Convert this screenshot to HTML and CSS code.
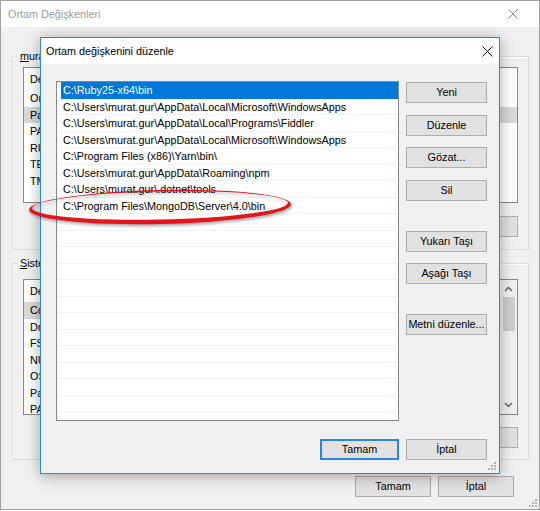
FILE: index.html
```html
<!DOCTYPE html>
<html lang="tr">
<head>
<meta charset="utf-8">
<title>Ortam Değişkenleri</title>
<link rel="stylesheet" href="styles.css">
</head>
<body>
<div class="win">
  <div class="titlebar">
    <span class="title-text muted">Ortam Değişkenleri</span>
    <svg class="close bg-close" width="10" height="10" viewBox="0 0 10 10"><path d="M0.5 0.5 L9.5 9.5 M9.5 0.5 L0.5 9.5" stroke="#8a8a8a" stroke-width="1"/></svg>
  </div>
  <div class="win-body">
    <fieldset class="group g1">
      <legend><u>m</u>urat.gur için kullanıcı değişkenleri</legend>
      <div class="vlist">
        <div class="vhead"><span>Değişken</span><span>Değer</span></div>
        <div class="vrow"><span>OneDrive</span><span>C:\Users\murat.gur\OneDrive</span></div>
        <div class="vrow sel"><span>Path</span><span>C:\Ruby25-x64\bin;C:\Users\murat.gur\AppData\Local\Microsoft\...</span></div>
        <div class="vrow"><span>PATH</span><span>C:\Users\murat.gur\.dotnet\tools</span></div>
        <div class="vrow"><span>RUBYOPT</span><span>-Eutf-8</span></div>
        <div class="vrow"><span>TEMP</span><span>C:\Users\murat.gur\AppData\Local\Temp</span></div>
        <div class="vrow"><span>TMP</span><span>C:\Users\murat.gur\AppData\Local\Temp</span></div>
      </div>
      <div class="btnrow">
        <button class="btn">Yeni...</button>
        <button class="btn">Düzenle...</button>
        <button class="btn">Sil</button>
      </div>
    </fieldset>
    <fieldset class="group g2">
      <legend><u>S</u>istem değişkenleri</legend>
      <div class="vlist scroll">
        <div class="vinner">
          <div class="vhead"><span>Değişken</span><span>Değer</span></div>
          <div class="vrow sel"><span>ComSpec</span><span>C:\WINDOWS\system32\cmd.exe</span></div>
          <div class="vrow"><span>DriverData</span><span>C:\Windows\System32\Drivers\DriverData</span></div>
          <div class="vrow"><span>FSHARPINSTALLDIR</span><span>C:\Program Files (x86)\Microsoft SDKs\F#\</span></div>
          <div class="vrow"><span>NUMBER_OF_PROCESSORS</span><span>4</span></div>
          <div class="vrow"><span>OS</span><span>Windows_NT</span></div>
          <div class="vrow"><span>Path</span><span>C:\Program Files\Docker\Docker\Resources\bin</span></div>
          <div class="vrow"><span>PATHEXT</span><span>.COM;.EXE;.BAT;.CMD;.VBS;.VBE;.JS</span></div>
        </div>
        <div class="vscroll">
          <svg class="chev" width="9" height="6" viewBox="0 0 9 6"><path d="M1 5 L4.5 1.5 L8 5" fill="none" stroke="#606060" stroke-width="1.4"/></svg>
          <div class="thumb"></div>
          <div class="track"></div>
          <svg class="chev" width="9" height="6" viewBox="0 0 9 6"><path d="M1 1 L4.5 4.5 L8 1" fill="none" stroke="#606060" stroke-width="1.4"/></svg>
        </div>
      </div>
      <div class="btnrow">
        <button class="btn">Yeni...</button>
        <button class="btn">Düzenle...</button>
        <button class="btn">Sil</button>
      </div>
    </fieldset>
    <div class="win-actions">
      <button class="btn">Tamam</button>
      <button class="btn">İptal</button>
    </div>
  </div>
  <svg class="grip win-grip" width="9" height="9" viewBox="0 0 9 9"><g fill="#b4b4b4"><rect x="6" y="0" width="2" height="2"/><rect x="3" y="3" width="2" height="2"/><rect x="6" y="3" width="2" height="2"/><rect x="0" y="6" width="2" height="2"/><rect x="3" y="6" width="2" height="2"/><rect x="6" y="6" width="2" height="2"/></g></svg>
</div>

<div class="dialog">
  <div class="dlg-title">
    <span class="title-text">Ortam değişkenini düzenle</span>
    <svg class="close" width="11" height="11" viewBox="0 0 11 11"><path d="M0.5 0.5 L10.5 10.5 M10.5 0.5 L0.5 10.5" stroke="#111" stroke-width="1"/></svg>
  </div>
  <div class="dlg-body">
    <div class="dlg-main">
      <div class="plist">
        <div class="prow sel">C:\Ruby25-x64\bin</div>
        <div class="prow">C:\Users\murat.gur\AppData\Local\Microsoft\WindowsApps</div>
        <div class="prow">C:\Users\murat.gur\AppData\Local\Programs\Fiddler</div>
        <div class="prow">C:\Users\murat.gur\AppData\Local\Microsoft\WindowsApps</div>
        <div class="prow">C:\Program Files (x86)\Yarn\bin\</div>
        <div class="prow">C:\Users\murat.gur\AppData\Roaming\npm</div>
        <div class="prow">C:\Users\murat.gur\.dotnet\tools</div>
        <div class="prow">C:\Program Files\MongoDB\Server\4.0\bin</div>
        <div class="prow"></div><div class="prow"></div><div class="prow"></div><div class="prow"></div>
        <div class="prow"></div><div class="prow"></div><div class="prow"></div><div class="prow"></div>
        <div class="prow"></div><div class="prow"></div><div class="prow"></div><div class="prow"></div>
        <div class="prow"></div>
      </div>
      <div class="side">
        <button class="btn dbtn">Yeni</button>
        <button class="btn dbtn">Düzenle</button>
        <button class="btn dbtn">Gözat...</button>
        <button class="btn dbtn">Sil</button>
        <button class="btn dbtn gap">Yukarı Taşı</button>
        <button class="btn dbtn">Aşağı Taşı</button>
        <button class="btn dbtn gap">Metni düzenle...</button>
      </div>
    </div>
    <div class="dlg-actions">
      <button class="btn ok">Tamam</button>
      <button class="btn cancel">İptal</button>
    </div>
  </div>
  <svg class="grip dlg-grip" width="9" height="9" viewBox="0 0 9 9"><g fill="#b4b4b4"><rect x="6" y="0" width="2" height="2"/><rect x="3" y="3" width="2" height="2"/><rect x="6" y="3" width="2" height="2"/><rect x="0" y="6" width="2" height="2"/><rect x="3" y="6" width="2" height="2"/><rect x="6" y="6" width="2" height="2"/></g></svg>
</div>

<svg class="mark" width="300" height="60" viewBox="20 180 300 60">
  <path fill="#e3141b" fill-rule="evenodd" transform="rotate(-1.2 160 206)"
    d="M29 207 A131 17 0 0 1 291 207 A131 17 0 0 1 29 207 Z
       M32 205.5 A128 14 0 0 0 288 205.5 A128 14 0 0 0 32 205.5 Z"/>
</svg>
</body>
</html>
```

FILE: styles.css
```css
* { box-sizing: border-box; }
html, body { margin: 0; padding: 0; }
body {
  width: 540px;
  height: 511px;
  overflow: hidden;
  position: relative;
  font-family: "Liberation Sans", Arial, sans-serif;
  font-size: 10.8px;
  color: #000;
  background: #fff;
}
button { font-family: inherit; font-size: 10.8px; color: #000; }

.win {
  position: relative;
  width: 540px;
  height: 510px;
  border: 1px solid #a0a0a0;
  background: #f0f0f0;
  display: flex;
  flex-direction: column;
}
.titlebar {
  height: 26px;
  background: #fff;
  display: flex;
  align-items: center;
  justify-content: space-between;
  padding: 0 21px 0 7px;
  flex: none;
}
.title-text { line-height: 14px; }
.muted { color: #9a9a9a; }

.win-body {
  display: flex;
  flex-direction: column;
  padding: 0 10px 0 11px;
}
.group {
  margin: 0;
  border: 1px solid #dcdcdc;
  box-shadow: inset 1px 1px 0 #fff;
  padding: 4px 10px 12px 10px;
  min-width: 0;
}
.group legend {
  padding: 0 2px;
  margin-left: -5px;
  line-height: 14px;
  height: 14px;
}
.g1 { margin-top: 22px; }
.g2 { margin-top: 6px; padding-top: 9px; padding-bottom: 11px; }

.vlist {
  height: 136px;
  background: #fff;
  border: 1px solid #828790;
  overflow: hidden;
  display: flex;
}
.vlist:not(.scroll) { flex-direction: column; }
.vinner { flex: 1; display: flex; flex-direction: column; min-width: 0; }
.vhead {
  height: 22px;
  flex: none;
  display: flex;
  align-items: center;
  border-bottom: 1px solid #fff;
}
.vhead span, .vrow span { padding-left: 6px; white-space: nowrap; overflow: hidden; }
.vhead span:first-child, .vrow span:first-child { width: 160px; flex: none; }
.vhead span + span, .vrow span + span { width: 240px; flex: none; }
.vrow {
  height: 16.5px;
  flex: none;
  display: flex;
  align-items: center;
}
.vrow.sel { background: #d9d9d9; }
.vscroll {
  width: 17px;
  flex: none;
  background: #f0f0f0;
  display: flex;
  flex-direction: column;
  align-items: center;
  padding: 6px 0 6px;
}
.vscroll .chev { flex: none; }
.thumb { width: 12px; height: 34px; background: #cdcdcd; margin-top: 5px; flex: none; }
.track { flex: 1; }

.btnrow {
  display: flex;
  justify-content: flex-end;
  gap: 8px;
  margin-top: 13px;
}
.btn {
  height: 21px;
  width: 76px;
  padding: 0;
  border: 1px solid #adadad;
  background: #e1e1e1;
  line-height: 19px;
  text-align: center;
  white-space: nowrap;
}
.g2 .btnrow { margin-top: 12px; }
.win-actions {
  display: flex;
  justify-content: flex-end;
  gap: 7px;
  margin-top: 16px;
  padding-right: 15px;
}

.grip { position: absolute; }
.win-grip { right: 1px; bottom: 1px; }
.dlg-grip { right: 2px; bottom: 2px; }

/* dialog on top */
.dialog {
  position: absolute;
  left: 40px;
  top: 37px;
  width: 460px;
  height: 437px;
  border: 1px solid #2b87d4;
  background: #f0f0f0;
  box-shadow: 0 2px 14px rgba(0, 0, 0, 0.33);
  display: flex;
  flex-direction: column;
}
.dlg-title {
  height: 26px;
  flex: none;
  background: #fff;
  display: flex;
  align-items: center;
  justify-content: space-between;
  padding: 0 6px 0 5px;
}
.dlg-body {
  flex: 1;
  display: flex;
  flex-direction: column;
  padding: 17px 12px 13px 15px;
}
.dlg-main { display: flex; gap: 7px; }
.plist {
  width: 343px;
  height: 340px;
  background: #fff;
  border: 1px solid #828790;
  overflow: hidden;
  display: flex;
  flex-direction: column;
}
.prow {
  height: 16.5px;
  flex: none;
  border-bottom: 1px solid #f2f2f2;
  padding: 1px 0 0 6px;
  line-height: 14.5px;
  white-space: nowrap;
}
.prow.sel {
  background: #0078d7;
  color: #fff;
  margin-left: 4px;
  padding-left: 2px;
  border-bottom-color: #0078d7;
}
.side {
  display: flex;
  flex-direction: column;
  padding-top: 1px;
  gap: 11.5px;
}
.dbtn { width: 81px; flex: none; }
.dbtn.gap { margin-top: 18.5px; }
.dlg-actions {
  display: flex;
  justify-content: flex-end;
  gap: 7px;
  margin-top: 18px;
}
.ok { width: 79px; border: 2px solid #2a86d6; line-height: 17px; }
.cancel { width: 81px; }

.mark {
  position: absolute;
  left: 20px;
  top: 180px;
  filter: drop-shadow(1px 2px 1.5px rgba(0, 0, 0, 0.35));
}
```
